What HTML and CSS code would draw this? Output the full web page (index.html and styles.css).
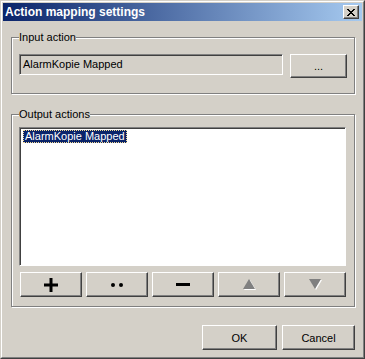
FILE: index.html
```html
<!DOCTYPE html>
<html lang="en">
<head>
  <meta charset="UTF-8" />
  <title>Action mapping settings</title>
  <link rel="stylesheet" href="styles.css">
</head>
<body>
  <div class="window">
    <div class="window-inner">
      <div class="titlebar">
        <span class="title">Action mapping settings</span>
        <button class="close-btn">
          <svg width="8" height="7" viewBox="0 0 8 7">
            <path d="M0 0h2v1h-2zM6 0h2v1h-2zM1 1h2v1h-2zM5 1h2v1h-2zM2 2h4v1h-4zM3 3h2v1h-2zM2 4h4v1h-4zM1 5h2v1h-2zM5 5h2v1h-2zM0 6h2v1h-2zM6 6h2v1h-2z" fill="#000"/>
          </svg>
        </button>
      </div>

      <div class="content">
        <fieldset class="group group-input">
          <legend>Input action</legend>
          <div class="input-row">
            <div class="field">AlarmKopie Mapped</div>
            <button class="btn btn-browse">...</button>
          </div>
        </fieldset>

        <fieldset class="group group-output">
          <legend>Output actions</legend>
          <div class="listbox">
            <div class="list-item selected">AlarmKopie Mapped</div>
          </div>
          <div class="tools">
            <button class="btn tool">
              <svg width="14" height="14" viewBox="0 0 14 14"><path d="M5.5 0h3v5.5h5.5v3h-5.5v5.5h-3v-5.5h-5.5v-3h5.5z" fill="#000"/></svg>
            </button>
            <button class="btn tool">
              <svg width="12" height="4" viewBox="0 0 12 4"><circle cx="2" cy="2" r="2" fill="#000"/><circle cx="10" cy="2" r="2" fill="#000"/></svg>
            </button>
            <button class="btn tool">
              <svg width="14" height="3" viewBox="0 0 14 3"><rect width="14" height="3" fill="#000"/></svg>
            </button>
            <button class="btn tool" disabled>
              <svg width="13" height="11" viewBox="0 0 13 11"><path d="M7 1l6 10h-12z" fill="#fff"/><path d="M6 0l6 10h-12z" fill="#808080"/></svg>
            </button>
            <button class="btn tool" disabled>
              <svg width="13" height="11" viewBox="0 0 13 11"><path d="M1 1h12l-6 10z" fill="#fff"/><path d="M0 0h12l-6 10z" fill="#808080"/></svg>
            </button>
          </div>
        </fieldset>

        <div class="footer">
          <button class="btn dlg-btn">OK</button>
          <button class="btn dlg-btn">Cancel</button>
        </div>
      </div>
    </div>
  </div>
</body>
</html>
```

FILE: styles.css
```css
body {
  margin: 0;
  background: #d4d0c8;
  font-family: "Liberation Sans", Arial, sans-serif;
  font-size: 11px;
  color: #000;
}
.window {
  width: 365px;
  height: 359px;
  box-sizing: border-box;
  border: 1px solid;
  border-color: #d4d0c8 #404040 #404040 #d4d0c8;
  background: #d4d0c8;
}
.window-inner {
  height: 100%;
  box-sizing: border-box;
  border: 1px solid;
  border-color: #fff #808080 #808080 #fff;
  padding: 1px;
  display: flex;
  flex-direction: column;
}
.titlebar {
  height: 18px;
  flex: none;
  display: flex;
  align-items: center;
  justify-content: space-between;
  padding: 0 3px 0 2px;
  background: linear-gradient(to right, #0a246a, #a6caf0);
}
.title {
  color: #fff;
  font-weight: bold;
  font-size: 12px;
  font-family: "Liberation Sans", Arial, sans-serif;
}
.close-btn {
  width: 16px;
  height: 14px;
  padding: 0;
  display: flex;
  align-items: center;
  justify-content: center;
  background: #d4d0c8;
  border: 1px solid;
  border-color: #fff #404040 #404040 #fff;
  box-shadow: inset -1px -1px 0 #808080;
}
.content {
  flex: 1;
  display: flex;
  flex-direction: column;
  padding: 10px 7px 6px 8px;
}
.group {
  margin: 0;
  padding: 10px 7px 15px 7px;
  border: 1px solid #808080;
  box-shadow: 1px 1px 0 #fff, inset 1px 1px 0 #fff;
}
.group legend {
  padding: 0;
  line-height: 13px;
  background: #d4d0c8;
}
.group-output {
  margin-top: 14px;
  padding: 6px 8px 9px 7px;
}
.input-row {
  display: flex;
  align-items: flex-start;
  gap: 7px;
}
.field {
  flex: 1;
  height: 21px;
  box-sizing: border-box;
  padding: 3px 3px;
  line-height: 13px;
  background: #d4d0c8;
  border: 1px solid;
  border-color: #808080 #fff #fff #808080;
  box-shadow: inset 1px 1px 0 #404040;
}
.btn {
  font-family: "Liberation Sans", Arial, sans-serif;
  font-size: 11px;
  color: #000;
  background: #d4d0c8;
  border: 1px solid;
  border-color: #fff #404040 #404040 #fff;
  box-shadow: inset -1px -1px 0 #808080;
  padding: 0;
  display: flex;
  align-items: center;
  justify-content: center;
}
.btn-browse {
  width: 57px;
  height: 24px;
}
.listbox {
  height: 139px;
  box-sizing: border-box;
  padding: 2px 3px;
  background: #fff;
  border: 1px solid;
  border-color: #808080 #fff #fff #808080;
  box-shadow: inset 1px 1px 0 #404040;
}
.list-item {
  display: inline-block;
  line-height: 11px;
  padding: 0 1px;
}
.list-item.selected {
  background: #0a246a;
  color: #fff;
  border: 1px dotted #f5db95;
}
.tools {
  display: flex;
  gap: 4px;
  margin-top: 6px;
  padding-left: 1px;
}
.tool {
  width: 62px;
  height: 25px;
}
.footer {
  margin-top: auto;
  display: flex;
  justify-content: flex-end;
  gap: 5px;
}
.dlg-btn {
  width: 75px;
  height: 25px;
}
.dlg-btn:last-child {
  width: 73px;
}
```
